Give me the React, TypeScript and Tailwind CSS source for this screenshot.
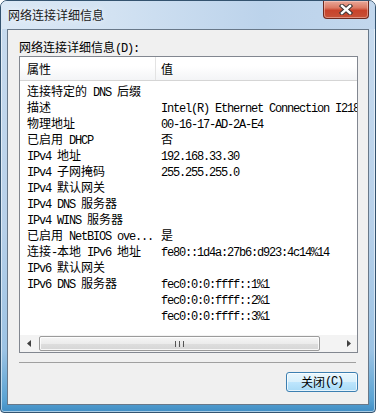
import React from "react"

const ascii = /^[\x20-\x7e]+$/

// SimSun-like mix: half-width ASCII (6px) next to full-width CJK (12px)
function Txt({ s }: { s: string }) {
  const parts = s.split(/([\x20-\x7e]+)/).filter(Boolean)
  return (
    <>
      {parts.map((p, i) =>
        ascii.test(p) ? (
          <span key={i} className="font-['Liberation_Mono',monospace] text-[12px] tracking-[-1.2px]">
            {p}
          </span>
        ) : (
          <span key={i} className="font-['Noto_Sans_CJK_SC',sans-serif] text-[12px]">
            {p}
          </span>
        )
      )}
    </>
  )
}

const rows: [string, string][] = [
  ["连接特定的 DNS 后缀", ""],
  ["描述", "Intel(R) Ethernet Connection I218"],
  ["物理地址", "00-16-17-AD-2A-E4"],
  ["已启用 DHCP", "否"],
  ["IPv4 地址", "192.168.33.30"],
  ["IPv4 子网掩码", "255.255.255.0"],
  ["IPv4 默认网关", ""],
  ["IPv4 DNS 服务器", ""],
  ["IPv4 WINS 服务器", ""],
  ["已启用 NetBIOS ove...", "是"],
  ["连接-本地 IPv6 地址", "fe80::1d4a:27b6:d923:4c14%14"],
  ["IPv6 默认网关", ""],
  ["IPv6 DNS 服务器", "fec0:0:0:ffff::1%1"],
  ["", "fec0:0:0:ffff::2%1"],
  ["", "fec0:0:0:ffff::3%1"],
]

function CloseButton() {
  return (
    <div className="w-[46px] h-[18px] rounded-b-[4px] border border-t-0 border-[#6e2a1f] bg-[linear-gradient(180deg,#e9a899_0%,#dc7a64_40%,#c8432b_55%,#c75238_100%)] shadow-[inset_0_0_0_1px_rgba(255,220,210,0.45)] flex items-center justify-center">
      <svg width="14" height="11" viewBox="0 0 14 11">
        <path d="M3 2 L11 9 M11 2 L3 9" stroke="#3b3434" strokeWidth="4.4" strokeLinecap="square" />
        <path d="M3 2 L11 9 M11 2 L3 9" stroke="#ffffff" strokeWidth="2.4" strokeLinecap="square" />
      </svg>
    </div>
  )
}

function HScrollbar() {
  return (
    <div className="h-[17px] flex items-center bg-[#f3f3f3]">
      <div className="w-[18px] h-full flex items-center justify-center">
        <svg width="4" height="7" viewBox="0 0 4 7">
          <path d="M4 0 L0 3.5 L4 7 Z" fill="#404040" />
        </svg>
      </div>
      <div className="ml-[1px] w-[281px] h-[15px] rounded-[2px] border border-[#9b9b9b] bg-[linear-gradient(180deg,#f6f6f6_0%,#ececec_50%,#dedede_51%,#d6d6d6_100%)] shadow-[inset_0_0_0_1px_rgba(255,255,255,0.8)] flex items-center justify-center gap-[1px]">
        <div className="w-[1px] h-[6px] bg-[#555]" />
        <div className="w-[1px] h-[6px] bg-[#e8e8e8]" />
        <div className="w-[1px] h-[6px] bg-[#555]" />
        <div className="w-[1px] h-[6px] bg-[#e8e8e8]" />
        <div className="w-[1px] h-[6px] bg-[#555]" />
      </div>
      <div className="flex-1 h-full flex items-center justify-end pr-[6px]">
        <svg width="4" height="7" viewBox="0 0 4 7">
          <path d="M0 0 L4 3.5 L0 7 Z" fill="#404040" />
        </svg>
      </div>
    </div>
  )
}

export default function App() {
  return (
    <div className="w-[376px] h-[413px] flex flex-col overflow-hidden rounded-t-[7px] rounded-b-[4px] border border-[#34536f] bg-[linear-gradient(180deg,#c9dcef_0%,#b7d0e9_55%,#9cc3e4_85%,#5aa3d3_97%,#3f8dc4_100%)] shadow-[inset_0_0_0_1px_rgba(255,255,255,0.55)]">
      <div className="h-[28px] shrink-0 flex items-start justify-between pl-[7px] pr-[6px] bg-[linear-gradient(90deg,#dbe8f5_0%,#d2e2f2_30%,#bcd3eb_70%,#c2d7ed_100%)]">
        <span className="leading-[27px] text-[12px] text-[#1a1a1a] font-['Noto_Sans_CJK_SC',sans-serif] [text-shadow:0_0_6px_rgba(255,255,255,0.95)]">
          网络连接详细信息
        </span>
        <CloseButton />
      </div>

      <div className="flex-1 mx-[6px] mb-[7px] border border-[#687889] bg-[#f0f0f0] flex flex-col pl-[11px] pr-[10px] text-black">
        <div className="mt-[8px] h-4 leading-4 whitespace-pre">
          <Txt s="网络连接详细信息(D):" />
        </div>

        <div className="mt-[2px] h-[297px] border border-[#828790] bg-white flex flex-col">
          <div className="h-[24px] shrink-0 flex border-b border-[#d5d5d5] bg-[linear-gradient(180deg,#ffffff_0%,#ffffff_40%,#f3f4f6_100%)]">
            <div className="w-[135px] pl-[7px] pt-[3px] leading-4 whitespace-pre">
              <Txt s="属性" />
            </div>
            <div className="w-[1px] bg-[#e3e3e3]" />
            <div className="flex-1 pl-[5px] pt-[3px] leading-4 whitespace-pre">
              <Txt s="值" />
            </div>
          </div>

          <div className="flex-1 overflow-hidden pt-[1px]">
            {rows.map(([k, v], i) => (
              <div key={i} className="h-4 flex leading-4 whitespace-pre">
                <div className="w-[135px] shrink-0 pl-[7px]">
                  <Txt s={k} />
                </div>
                <div className="shrink-0 pl-[6px]">
                  <Txt s={v} />
                </div>
              </div>
            ))}
          </div>

          <HScrollbar />
        </div>

        <div className="mt-[9px] h-[1px] mr-[2px] bg-[#a0a0a0]" />

        <div className="mt-[9px] flex justify-end">
          <button className="w-[72px] h-[20px] rounded-[3px] border border-[#3c7fb1] bg-[linear-gradient(180deg,#e8f6fd_0%,#d9f0fc_50%,#bee6fd_51%,#a9daf6_100%)] shadow-[inset_0_0_0_1px_rgba(255,255,255,0.7)] flex items-center justify-center leading-4 whitespace-pre text-black">
            <Txt s="关闭(C)" />
          </button>
        </div>
      </div>
    </div>
  )
}
